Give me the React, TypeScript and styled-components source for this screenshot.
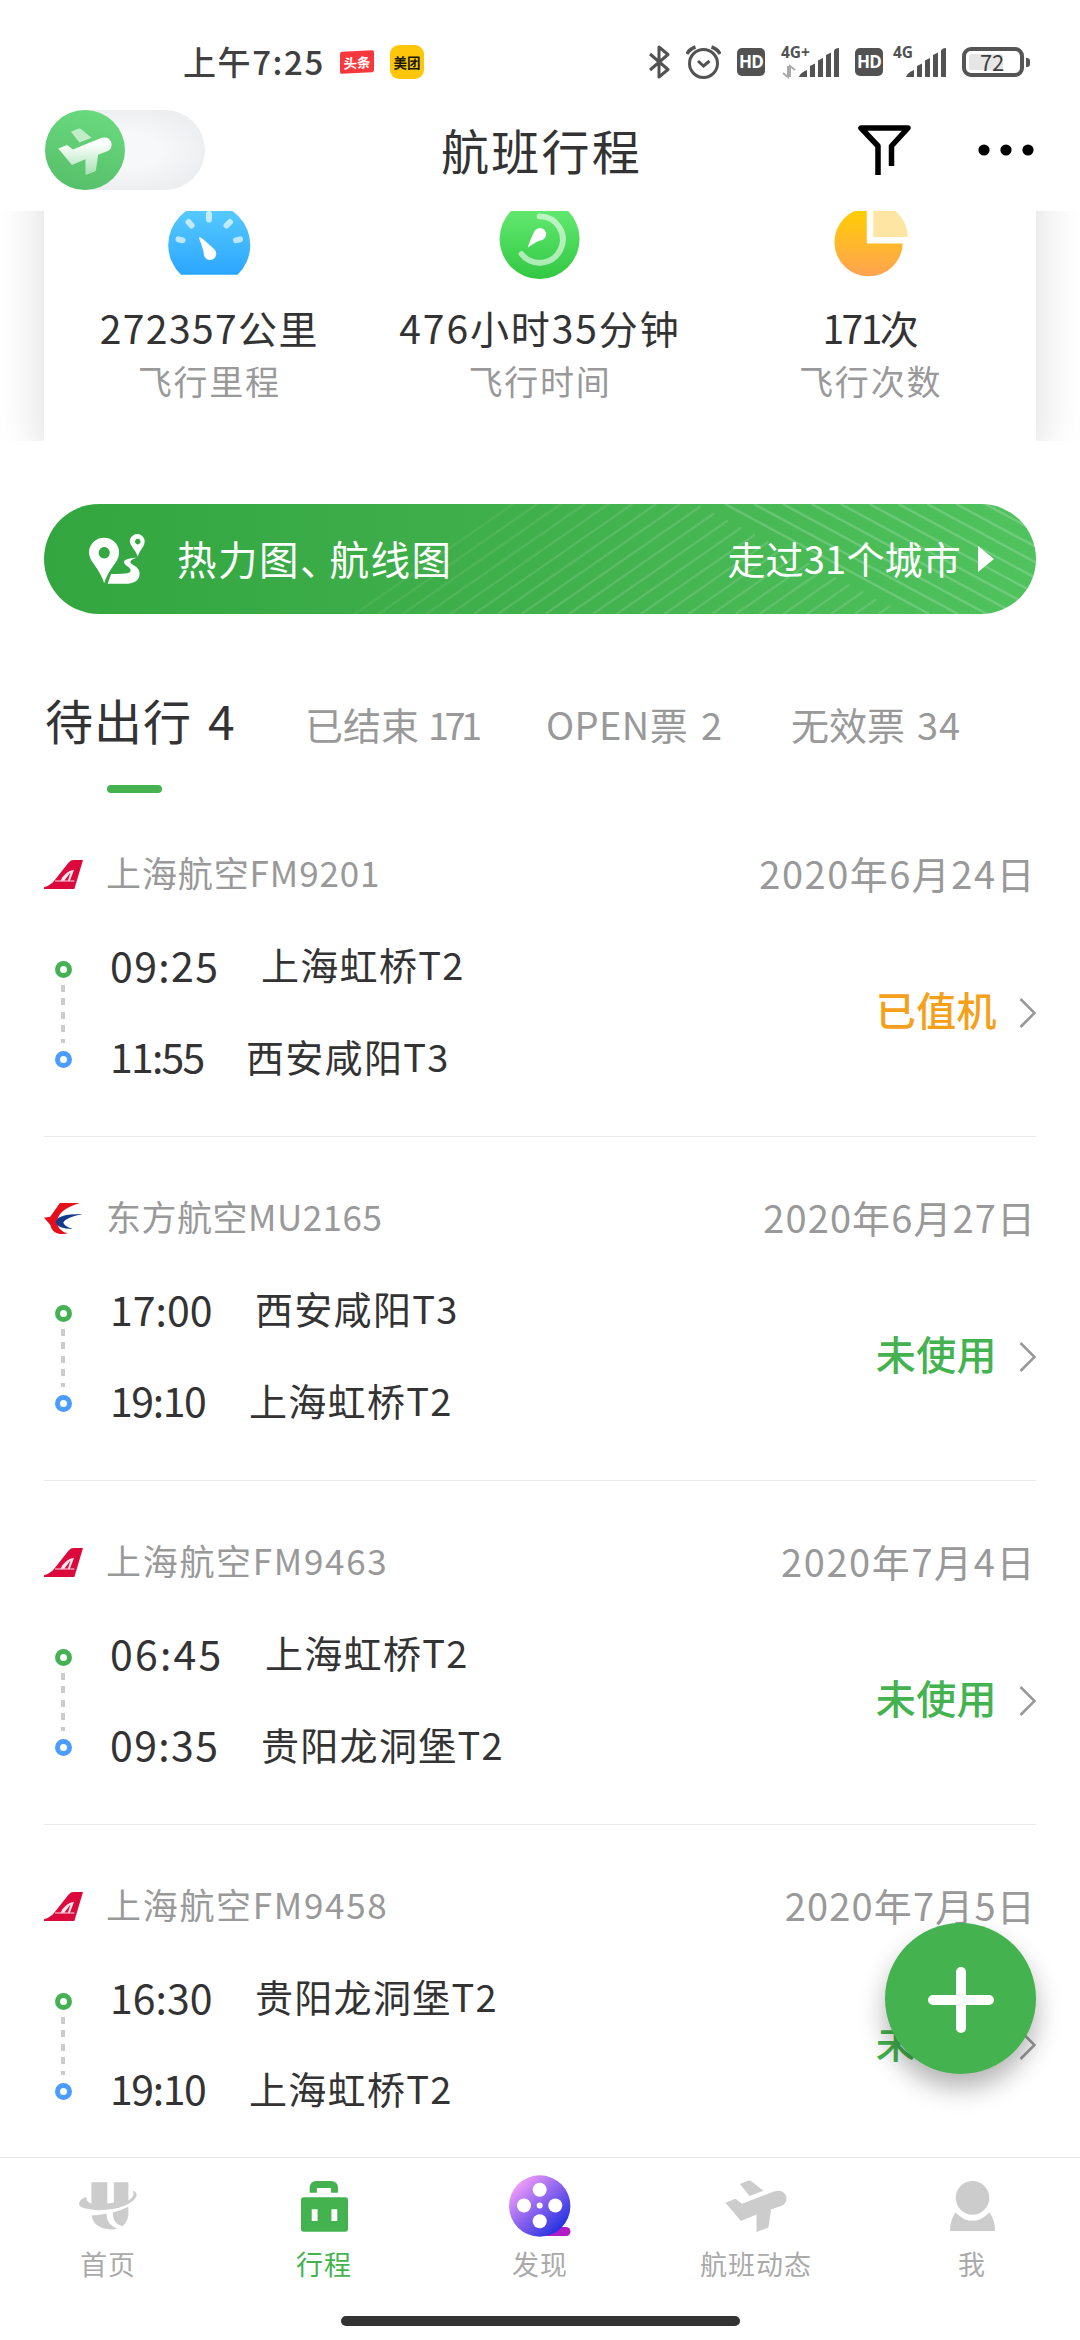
import React from "react";
import styled, { createGlobalStyle } from "styled-components";

const GREEN = "#43b24f";
const INK = "#333333";
const MUTED = "#999999";

const GlobalStyle = createGlobalStyle`
  * { box-sizing: border-box; }
  html, body { margin: 0; padding: 0; background: #fff; }
  body { font-family: "Noto Sans CJK SC", "Noto Sans", sans-serif; color: ${INK}; }
`;

const Phone = styled.div`
  position: relative;
  width: 1080px;
  height: 2340px;
  display: flex;
  flex-direction: column;
  overflow: hidden;
  background: #fff;
  white-space: nowrap;
`;

/* ---------- status bar ---------- */

const StatusBar = styled.div`
  height: 100px;
  padding: 24px 50px 0 183px;
  display: flex;
  align-items: center;
  flex: none;
`;

const Clock = styled.span`
  font-size: 33px;
  line-height: 48px;
  margin-top: -3px;
  font-weight: 500;
  letter-spacing: 1.6px;
  color: #404040;
  width: 157px;
`;

const AppBadge = styled.span<{ $bg: string; $color: string }>`
  width: 34px;
  height: 34px;
  border-radius: 9px;
  margin-right: 16px;
  display: flex;
  align-items: center;
  justify-content: center;
  background: ${(p) => p.$bg};
  color: ${(p) => p.$color};
  font-size: 13.5px;
  font-weight: 700;
`;

const Ribbon = styled.span`
  width: 34px;
  height: 22px;
  border-radius: 2px;
  background: #f8383d;
  display: flex;
  align-items: center;
  justify-content: center;
  transform: skewY(-3deg);
`;

const SystemIcons = styled.div`
  margin-left: auto;
  display: flex;
  align-items: center;
  gap: 16px;
`;

const HdBadge = styled.span`
  width: 28px;
  height: 28px;
  border-radius: 5px;
  background: #525252;
  color: #fff;
  font: 700 17px/28px "Open Sans", sans-serif;
  letter-spacing: -0.8px;
  text-align: center;
`;

const Signal = styled.div<{ $width: number; $shift: number }>`
  width: ${(p) => p.$width}px;
  height: 34px;
  margin-left: ${(p) => p.$shift}px;
  display: grid;
`;

const Network = styled.span`
  grid-area: 1 / 1;
  font: 700 15.5px/14px "Open Sans", sans-serif;
  color: #525252;
`;

const SignalDrawing = styled.svg`
  grid-area: 1 / 1;
  justify-self: end;
  align-self: end;
  display: block;
`;

const Battery = styled.div`
  width: 62px;
  height: 30px;
  border: 4px solid #555;
  border-radius: 9px;
  padding: 3px;
`;

const BatteryLevel = styled.div`
  width: 34px;
  height: 16px;
  border-radius: 3px;
  background: #e6e6e6;
  padding-left: 11px;
  color: #404040;
  font-size: 22px;
  line-height: 14px;
  letter-spacing: -0.3px;
`;

const BatteryNub = styled.div`
  width: 4px;
  height: 9px;
  margin-left: -14px;
  border-radius: 0 3px 3px 0;
  background: #555;
`;

/* ---------- header ---------- */

const Header = styled.header`
  height: 111px;
  padding: 10px 45px 0;
  flex: none;
  display: grid;
  grid-template-columns: 1fr auto 1fr;
  align-items: start;
`;

const Toggle = styled.div`
  width: 160px;
  height: 80px;
  border-radius: 40px;
  background: radial-gradient(ellipse at 50% 50%, #f7f8fa 30%, #edeef0 75%);
`;

const Knob = styled.div`
  width: 80px;
  height: 80px;
  border-radius: 50%;
  background: linear-gradient(195deg, #6bdc80, #55bd68);
  padding: 18px 0 0 13px;
`;

const Title = styled.h1`
  margin: -1px 0 0 3px;
  font-size: 48px;
  line-height: 80px;
  font-weight: 400;
  letter-spacing: 2.2px;
`;

const HeaderActions = styled.div`
  display: flex;
  justify-content: flex-end;
  align-items: center;
  height: 80px;
  padding-right: 1px;
  gap: 67px;
`;

/* ---------- statistics ---------- */

const Content = styled.main`
  flex: 1;
  min-height: 0;
  overflow: hidden;
`;

const StatsViewport = styled.section`
  height: 230px;
  overflow: hidden;
  padding: 0 44px;
`;

const StatsCard = styled.div`
  height: 330px;
  margin-top: -80px;
  padding-top: 80px;
  border-radius: 12px;
  box-shadow: 0 0 50px rgba(0, 0, 0, 0.15);
  background: #fff;
  display: grid;
  grid-template-columns: repeat(3, 1fr);
`;

const Stat = styled.div`
  display: flex;
  flex-direction: column;
  align-items: center;
`;

const StatIcon = styled.svg`
  display: block;
  width: 90px;
  height: 70px;
`;

const StatValue = styled.div<{ $track: number }>`
  margin-top: 17px;
  font-size: 39px;
  line-height: 58px;
  letter-spacing: ${(p) => p.$track}px;
`;

const Tight = styled.span`
  letter-spacing: -2.6px;
`;

const StatLabel = styled.div`
  margin-top: 1px;
  font-size: 34px;
  line-height: 48px;
  letter-spacing: 1.8px;
  color: ${MUTED};
`;

/* ---------- banner ---------- */

const Banner = styled.section`
  position: relative;
  margin: 63px 44px 0;
  height: 110px;
  border-radius: 55px;
  overflow: hidden;
  display: flex;
  align-items: center;
  padding: 0 42px 0 45px;
  color: #fff;
  background: linear-gradient(90deg, #33a640, #40b04c 50%, #50c35e);
`;

const Stripes = styled.svg`
  position: absolute;
  inset: 0;
`;

const BannerTitle = styled.span`
  position: relative;
  margin: -4px 0 0 32px;
  font-size: 39.5px;
  letter-spacing: 1.5px;
`;

const Comma = styled.span`
  letter-spacing: -10px;
`;

const BannerLink = styled.span`
  position: relative;
  margin: -4px 17px 0 auto;
  font-size: 38px;
  letter-spacing: 0.2px;
`;

const Layered = styled.svg`
  position: relative;
  display: block;
`;

/* ---------- tabs ---------- */

const Tabs = styled.nav`
  height: 171px;
  padding: 65px 45px 0;
  display: flex;
  align-items: baseline;
`;

const Tab = styled.div<{ $active?: boolean; $width: number; $track?: number }>`
  width: ${(p) => p.$width}px;
  display: flex;
  align-items: baseline;
  line-height: 80px;
  font-size: ${(p) => (p.$active ? 48 : 38)}px;
  letter-spacing: ${(p) => p.$track ?? 0}px;
  color: ${(p) => (p.$active ? INK : MUTED)};
`;

const Count = styled.span<{ $gap: number; $track?: number }>`
  margin-left: ${(p) => p.$gap}px;
  letter-spacing: ${(p) => p.$track ?? 0}px;
`;

const TabMarker = styled.div`
  width: 55px;
  height: 8px;
  margin-left: 107px;
  border-radius: 4px;
  background: ${GREEN};
`;

/* ---------- flight list ---------- */

const Flight = styled.article`
  height: 344px;
  margin: 0 44px;
  padding-top: 50px;
  border-bottom: 1px solid #ebebeb;
`;

const FlightHead = styled.div`
  height: 62px;
  display: flex;
  align-items: center;
`;

const FlightName = styled.span<{ $track: number }>`
  margin: -6px 0 0 23px;
  font-size: 35px;
  letter-spacing: ${(p) => p.$track}px;
  color: ${MUTED};
`;

const FlightDate = styled.span<{ $track: number }>`
  margin: -3px 0 0 auto;
  font-size: 38px;
  letter-spacing: ${(p) => p.$track}px;
  color: ${MUTED};
`;

const Route = styled.div`
  height: 183px;
  margin-top: 17px;
  display: flex;
  align-items: center;
`;

const Timeline = styled.div`
  width: 17px;
  margin: 2px 0 0 11px;
  display: flex;
  flex-direction: column;
  align-items: center;
`;

const Ring = styled.span<{ $color: string }>`
  width: 17px;
  height: 17px;
  border-radius: 50%;
  border: 5px solid ${(p) => p.$color};
`;

const Dashes = styled.span`
  width: 4px;
  height: 58px;
  margin: 7px 2px 8px 0;
  background: repeating-linear-gradient(#ccc 0 7px, transparent 7px 13.4px);
`;

const Legs = styled.div`
  margin: -8px 0 0 38px;
`;

const Leg = styled.div`
  height: 91.5px;
  display: flex;
  align-items: center;
`;

const Time = styled.span<{ $width: number; $track: number }>`
  width: ${(p) => p.$width}px;
  font-size: 41px;
  letter-spacing: ${(p) => p.$track}px;
`;

const Airport = styled.span`
  font-size: 38px;
  letter-spacing: 1.3px;
`;

const State = styled.span<{ $color: string }>`
  margin: -9px 22px 0 auto;
  font-size: 40px;
  font-weight: 500;
  letter-spacing: 0.4px;
  color: ${(p) => p.$color};
`;

const Chevron = styled.svg`
  display: block;
  margin-top: -1px;
`;

const AddButton = styled.button`
  position: absolute;
  left: 884.5px;
  top: 1923px;
  width: 151px;
  height: 151px;
  border: 0;
  border-radius: 50%;
  padding: 3px 0 0 2px;
  display: flex;
  align-items: center;
  justify-content: center;
  background: ${GREEN};
  box-shadow: 0 14px 26px rgba(0, 0, 0, 0.3);
`;

/* ---------- bottom navigation ---------- */

const BottomBar = styled.nav`
  height: 183px;
  flex: none;
  border-top: 1px solid #e8e8e8;
  background: #fff;
`;

const NavItems = styled.div`
  display: grid;
  grid-template-columns: repeat(5, 1fr);
  height: 158px;
`;

const NavItem = styled.div<{ $active?: boolean }>`
  display: flex;
  flex-direction: column;
  align-items: center;
  font-size: 27px;
  line-height: 42px;
  letter-spacing: 1px;
  color: ${(p) => (p.$active ? GREEN : "#aaaaaa")};
`;

const NavIcon = styled.div`
  height: 85px;
  padding-top: 11px;
  display: flex;
  align-items: center;
`;

const HomeIndicator = styled.div`
  width: 399px;
  height: 10px;
  margin: 0 auto;
  border-radius: 5px;
  background: #333;
`;

/* ---------- drawings ---------- */

const Bars = () => (
  <g fill="#525252">
    <path d="M0 29 Q1 25 8 22 V29Z" />
    <path d="M11 18 L16 15.5 V29 H11Z" />
    <path d="M19 12.500 L24 10 V29 H19Z" />
    <path d="M27 7 L32 4.500 V29 H27Z" />
    <path d="M35 2.500 Q36 0 40 0 V29 H35Z" />
  </g>
);

const planeBody =
  "M540 192 L567 181 Q571 180 575 184 L588 195 L680 158 Q705 150 715 170 Q721 190 704 200 L672 212 L665 262 Q664 267 660 268 L630 279 V227 L585 246Z";
const planeWing = "M582 136 L603 127 Q611 123 617 129 L650 156 L610 172Z";

const ShanghaiLogo = () => (
  <svg width="39" height="29" viewBox="128 87 113 87" preserveAspectRatio="none">
    <path d="M128 174 V169 Q150 162 161 145 L200 94 Q206 87 213 87 H241 L216 174Z" fill="#dc0a3c" />
    <path d="M160 150 H216" stroke="#fff" strokeWidth="2.500" />
    <path d="M176 149 Q188 121 215 116 L203 149 H197 L205 124 L187 149Z" fill="#fff" opacity="0.9" />
  </svg>
);

const EasternLogo = () => (
  <svg width="39" height="31" viewBox="128 96 113 93" preserveAspectRatio="none">
    <path d="M174 96 H232 Q178 112 168 142 Q160 176 196 187 Q188 190 170 188 Q150 182 146 161 L128 140 L146 137Z" fill="#e50f19" />
    <path d="M240 129 Q168 128 162 152 Q164 172 212 174 Q184 165 184 154 Q192 139 240 129Z" fill="#12398c" />
  </svg>
);

const MapStripes = () => {
  const left = Array.from({ length: 23 }, (_, i) => {
    const b = 311 + i * 23.8;
    const y = Math.max(0, (0.5277 * (b - 494.3)) / 1.76);
    return { b, y, x: b + (110 - y) * 1.44, o: 0.07 + Math.min(i, 8) * 0.007 };
  });
  const right = Array.from({ length: 11 }, (_, i) => 681 + i * 28.9);
  return (
    <Stripes width="992" height="110" viewBox="0 0 992 110">
      <g stroke="#fff" strokeWidth="2.400">
        {left.map((l) => (
          <line key={l.b} x1={l.b} y1={110} x2={l.x} y2={l.y} strokeOpacity={l.o} />
        ))}
        {right.map((t) => (
          <line key={t} x1={t} y1={0} x2={t + 204.2} y2={110} strokeOpacity={0.18} />
        ))}
      </g>
    </Stripes>
  );
};

const GaugeIcon = () => (
  <StatIcon viewBox="164 211 90 70">
    <defs>
      <linearGradient id="gauge" x1="0" y1="0" x2="0" y2="1">
        <stop offset="0" stopColor="#5acdff" />
        <stop offset="1" stopColor="#2ba6ff" />
      </linearGradient>
    </defs>
    <path d="M181 274.700 A41 41 0 1 1 237.500 274.700Z" fill="url(#gauge)" />
    <g stroke="#fff" strokeOpacity="0.65" strokeWidth="6" strokeLinecap="round">
      <path d="M209 214 V219.500 M188.500 222 L191.500 225.500 M230 222 L226.500 225.500 M178.500 239.300 L182.500 240.300 M240 239.300 L236 240.300" />
    </g>
    <path d="M199.300 237 Q201 236.500 214.500 249.500 A6.200 6.200 0 1 1 203.800 254 Q204 251 199.300 239Z" fill="#fff" />
  </StatIcon>
);

const TimeIcon = () => (
  <StatIcon viewBox="495 211 90 70">
    <defs>
      <linearGradient id="clock" x1="0" y1="0" x2="0" y2="1">
        <stop offset="0" stopColor="#69ee76" />
        <stop offset="1" stopColor="#32c843" />
      </linearGradient>
    </defs>
    <circle cx="539.600" cy="239" r="40" fill="url(#clock)" />
    <path d="M539.600 216.300 A23.200 23.200 0 1 1 521.500 254" fill="none" stroke="#fff" strokeOpacity="0.58" strokeWidth="5.800" strokeLinecap="round" />
    <path d="M528 247.500 Q527.500 246 534.500 231 A6.300 6.300 0 1 1 542.500 240 Q538 240 528 247.500Z" fill="#fff" />
  </StatIcon>
);

const PieIcon = () => (
  <StatIcon viewBox="826 211 90 70">
    <defs>
      <linearGradient id="pie" x1="0" y1="0" x2="0" y2="1">
        <stop offset="0" stopColor="#ffcf00" />
        <stop offset="1" stopColor="#ffa352" />
      </linearGradient>
    </defs>
    <path d="M866.800 208 V243.500 H902.800 A34.200 34.200 0 1 1 866.800 208Z" fill="url(#pie)" />
    <path d="M873.300 203 V237 H907.800 A34.500 34.500 0 0 0 873.300 203Z" fill="#ffe5a3" />
  </StatIcon>
);

const PinsIcon = () => (
  <Layered width="56" height="50" viewBox="259 163 162 149" preserveAspectRatio="none">
    <path fillRule="evenodd" fill="#fff" d="M303 310 Q297 287 272 251 Q259 233 259 219 A43.500 45 0 0 1 346 219 Q346 235 334 251 Q309 285 303 310Z M303 202 A16 17 0 1 0 303.100 202Z" />
    <path fillRule="evenodd" fill="#fff" d="M400 230 Q396 217 385 203 Q377 193 377 185 A21.500 22 0 0 1 420 185 Q420 195 413 205 Q404 217 400 230Z M400 177 A8 8.500 0 1 0 400.100 177Z" />
    <path fill="#fff" d="M397 233 Q359 236 360 247 Q361 254 373 261 Q388 274 370 280 Q360 282 323 282 L313 311 H372 Q396 310 404 292 Q412 268 385 254 Q368 244 397 233Z" />
  </Layered>
);

/* ---------- data ---------- */

type LegData = { time: string; width: number; track: number; place: string };
type FlightData = {
  eastern?: boolean;
  name: string;
  nameTrack: number;
  date: string;
  dateTrack: number;
  state: string;
  color: string;
  legs: LegData[];
};

const flights: FlightData[] = [
  {
    name: "上海航空FM9201", nameTrack: 0.9, date: "2020年6月24日", dateTrack: 1.5, state: "已值机", color: "#f5a01a",
    legs: [
      { time: "09:25", width: 151, track: 1.4, place: "上海虹桥T2" },
      { time: "11:55", width: 136, track: -1.8, place: "西安咸阳T3" },
    ],
  },
  {
    eastern: true, name: "东方航空MU2165", nameTrack: 0.5, date: "2020年6月27日", dateTrack: 1.1, state: "未使用", color: GREEN,
    legs: [
      { time: "17:00", width: 145, track: 0, place: "西安咸阳T3" },
      { time: "19:10", width: 139, track: -1.4, place: "上海虹桥T2" },
    ],
  },
  {
    name: "上海航空FM9463", nameTrack: 1.7, date: "2020年7月4日", dateTrack: 1.6, state: "未使用", color: GREEN,
    legs: [
      { time: "06:45", width: 155, track: 2.2, place: "上海虹桥T2" },
      { time: "09:35", width: 151, track: 1.4, place: "贵阳龙洞堡T2" },
    ],
  },
  {
    name: "上海航空FM9458", nameTrack: 1.7, date: "2020年7月5日", dateTrack: 1.2, state: "未使用", color: GREEN,
    legs: [
      { time: "16:30", width: 145, track: 0, place: "贵阳龙洞堡T2" },
      { time: "19:10", width: 139, track: -1.4, place: "上海虹桥T2" },
    ],
  },
];

const FlightRow = ({ flight }: { flight: FlightData }) => (
  <Flight>
    <FlightHead>
      {flight.eastern ? <EasternLogo /> : <ShanghaiLogo />}
      <FlightName $track={flight.nameTrack}>{flight.name}</FlightName>
      <FlightDate $track={flight.dateTrack}>{flight.date}</FlightDate>
    </FlightHead>
    <Route>
      <Timeline>
        <Ring $color="#46b152" />
        <Dashes />
        <Ring $color="#4c9dfb" />
      </Timeline>
      <Legs>
        {flight.legs.map((leg) => (
          <Leg key={leg.time}>
            <Time $width={leg.width} $track={leg.track}>{leg.time}</Time>
            <Airport>{leg.place}</Airport>
          </Leg>
        ))}
      </Legs>
      <State $color={flight.color}>{flight.state}</State>
      <Chevron width="17" height="30" viewBox="0 0 17 30" fill="none" stroke="#999" strokeWidth="2.600">
        <path d="M1.500 1 L15.500 15 L1.500 29" />
      </Chevron>
    </Route>
  </Flight>
);

export default function App() {
  return (
    <Phone>
      <GlobalStyle />
      <StatusBar>
        <Clock>上午7:25</Clock>
        <AppBadge $bg="#fff" $color="#fff"><Ribbon>头条</Ribbon></AppBadge>
        <AppBadge $bg="#ffc60a" $color="#1a1a00">美团</AppBadge>
        <SystemIcons>
          <svg width="21" height="34" viewBox="0 0 21 34" fill="none" stroke="#525252" strokeWidth="3" strokeLinejoin="round">
            <path d="M1 9 L19 24.500 L10 32 V2 L19 9.500 L1 25" />
          </svg>
          <svg width="35" height="34" viewBox="0 0 35 34" fill="none" stroke="#525252" strokeWidth="3">
            <circle cx="17.500" cy="18.500" r="14" />
            <path d="M1 9 Q3.500 4 9.500 2 M34 9 Q31.500 4 25.500 2" strokeWidth="3.500" />
            <path d="M12 16 L17.500 21 L23.500 16" />
          </svg>
          <HdBadge>HD</HdBadge>
          <Signal $width={58} $shift={0}>
            <Network>4G+</Network>
            <SignalDrawing width="58" height="33" viewBox="-18 -2 58 33">
              <Bars />
              <path d="M-11 18 V29 L-16 25 M-9 29 V18 L-4 22" fill="none" stroke="#aaa" strokeWidth="2" />
            </SignalDrawing>
          </Signal>
          <HdBadge>HD</HdBadge>
          <Signal $width={53} $shift={-6}>
            <Network>4G</Network>
            <SignalDrawing width="40" height="33" viewBox="0 -2 40 33"><Bars /></SignalDrawing>
          </Signal>
          <Battery><BatteryLevel>72</BatteryLevel></Battery>
          <BatteryNub />
        </SystemIcons>
      </StatusBar>

      <Header>
        <Toggle>
          <Knob>
            <svg width="54" height="47" viewBox="539 124 179 155" preserveAspectRatio="none">
              <defs>
                <linearGradient id="knob" x1="0" y1="0" x2="0" y2="1">
                  <stop offset="0.150" stopColor="#fff" />
                  <stop offset="1" stopColor="#fff" stopOpacity="0.450" />
                </linearGradient>
              </defs>
              <path d={planeWing} fill="#fff" opacity="0.600" />
              <path d={planeBody} fill="url(#knob)" />
            </svg>
          </Knob>
        </Toggle>
        <Title>航班行程</Title>
        <HeaderActions>
          <svg width="53" height="50" viewBox="0 0 53 50" fill="none" stroke="#000" strokeWidth="5.500" strokeLinejoin="round">
            <path d="M20 50 V21 L3 3 H50 L33.500 21 V41" />
          </svg>
          <svg width="56" height="12" viewBox="0 0 56 12">
            <circle cx="6" cy="6" r="5.600" />
            <circle cx="28" cy="6" r="5.600" />
            <circle cx="50" cy="6" r="5.600" />
          </svg>
        </HeaderActions>
      </Header>

      <Content>
        <StatsViewport>
          <StatsCard>
            <Stat>
              <GaugeIcon />
              <StatValue $track={1.4}>272357公里</StatValue>
              <StatLabel>飞行里程</StatLabel>
            </Stat>
            <Stat>
              <TimeIcon />
              <StatValue $track={1.9}>476小时35分钟</StatValue>
              <StatLabel>飞行时间</StatLabel>
            </Stat>
            <Stat>
              <PieIcon />
              <StatValue $track={0}><Tight>171</Tight>次</StatValue>
              <StatLabel>飞行次数</StatLabel>
            </Stat>
          </StatsCard>
        </StatsViewport>

        <Banner>
          <MapStripes />
          <PinsIcon />
          <BannerTitle>热力图<Comma>、</Comma>航线图</BannerTitle>
          <BannerLink>走过31个城市</BannerLink>
          <Layered width="16" height="26" viewBox="0 0 16 26"><path d="M0 0 L16 13 L0 26Z" fill="#fff" /></Layered>
        </Banner>

        <Tabs>
          <Tab $active $width={260} $track={1}>待出行<Count $gap={16}>4</Count></Tab>
          <Tab $width={241}>已结束<Count $gap={9} $track={-4.6}>171</Count></Tab>
          <Tab $width={245} $track={0.4}>OPEN票<Count $gap={13}>2</Count></Tab>
          <Tab $width={200}>无效票<Count $gap={12} $track={1}>34</Count></Tab>
        </Tabs>
        <TabMarker />

        {flights.map((f) => <FlightRow key={f.name} flight={f} />)}
      </Content>

      <AddButton>
        <svg width="66" height="66" viewBox="0 0 66 66" stroke="#fff" strokeWidth="10" strokeLinecap="round">
          <path d="M33 5 V61 M5 33 H61" />
        </svg>
      </AddButton>

      <BottomBar>
        <NavItems>
          <NavItem>
            <NavIcon>
              <svg width="58" height="48" viewBox="229 128 168 143" preserveAspectRatio="none" fill="#ccc">
                <path d="M251 173 Q248 188 265 192 V129 H311 V192 Q320 192 330 189 V129 H372 V183 Q392 172 385 154 Q397 157 396 169 Q390 186 360 199 Q330 212 285 212 Q229 209 229 193 Q231 178 251 173Z" />
                <path d="M265 228 Q290 227 309 222 Q306 252 340 268 Q275 276 265 228Z" />
                <path d="M327 219 Q350 213 372 202 V225 Q370 249 354 260 Q325 251 327 219Z" />
              </svg>
            </NavIcon>
            首页
          </NavItem>
          <NavItem $active>
            <NavIcon>
              <svg width="47" height="51" viewBox="874 122 136 153" preserveAspectRatio="none" fill={GREEN}>
                <path d="M899 157 V141 Q901 123 918 122 H963 Q980 124 981 141 V157 H961 V143 H920 V157Z" />
                <path fillRule="evenodd" d="M882 171 H1002 Q1010 171 1010 179 V266 Q1010 274 1002 274 H882 Q874 274 874 266 V179 Q874 171 882 171Z M905 207 V242 H922 V207Z M962 207 V242 H979 V207Z" />
              </svg>
            </NavIcon>
            行程
          </NavItem>
          <NavItem>
            <NavIcon>
              <svg width="62" height="62" viewBox="0 0 62 62">
                <defs>
                  <linearGradient id="film" x1="0.100" y1="0.100" x2="0.850" y2="0.900">
                    <stop offset="0" stopColor="#f9a2fb" />
                    <stop offset="0.500" stopColor="#8c63ee" />
                    <stop offset="1" stopColor="#2030e0" />
                  </linearGradient>
                </defs>
                <path d="M35 61 V52 H57 A4.500 4.500 0 0 1 57 61Z" fill="#b21ac4" />
                <circle cx="30.700" cy="31" r="30.700" fill="url(#film)" />
                <g fill="#fff">
                  <circle cx="30.700" cy="14.800" r="7" />
                  <circle cx="30.700" cy="46.300" r="7" />
                  <circle cx="15" cy="30.500" r="7" />
                  <circle cx="46.300" cy="30.500" r="7" />
                  <circle cx="30.700" cy="30.500" r="3" />
                </g>
              </svg>
            </NavIcon>
            发现
          </NavItem>
          <NavItem>
            <NavIcon>
              <svg width="62" height="52" viewBox="539 124 179 155" preserveAspectRatio="none" fill="#ccc">
                <path d={planeWing} />
                <path d={planeBody} />
              </svg>
            </NavIcon>
            航班动态
          </NavItem>
          <NavItem>
            <NavIcon>
              <svg width="45" height="50" viewBox="1191 124 130 148" preserveAspectRatio="none" fill="#ccc">
                <ellipse cx="1256" cy="174" rx="48.500" ry="50" />
                <path d="M1207 217 Q1256 267 1305 217 Q1321 240 1321 272 H1191 Q1191 240 1207 217Z" />
              </svg>
            </NavIcon>
            我
          </NavItem>
        </NavItems>
        <HomeIndicator />
      </BottomBar>
    </Phone>
  );
}
